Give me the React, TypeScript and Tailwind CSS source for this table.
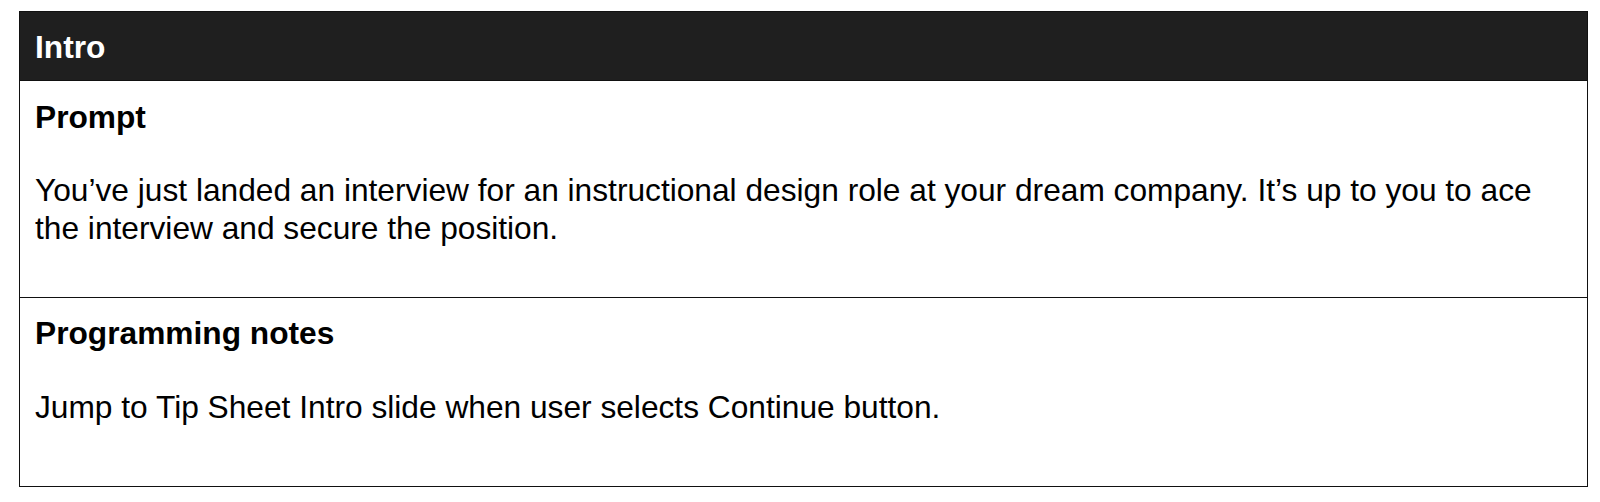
export default function App() {
  return (
    <div className="w-[1600px] h-[502px] bg-white pt-[11px] pl-[19px]" style={{ fontFamily: '"Liberation Sans", Arial, sans-serif' }}>
      <div className="w-[1569px] border border-[#111]">
        <div className="h-[68px] bg-[#1f1f1f] pt-[21px] pl-[15px]">
          <div className="text-[31.7px] leading-[28px] font-bold text-white">Intro</div>
        </div>
        <div className="h-[217px] border-t border-[#111] pt-[22px] pl-[15px] pr-[36px] text-black">
          <div className="text-[31.7px] leading-[28px] font-bold">Prompt</div>
          <p className="mt-[40px] text-[31.7px] leading-[38px]">
            You’ve just landed an interview for an instructional design role at your dream company. It’s up to you to ace the interview and secure the position.
          </p>
        </div>
        <div className="h-[189px] border-t border-[#111] pt-[21px] pl-[15px] pr-[36px] text-black">
          <div className="text-[31.7px] leading-[28px] font-bold">Programming notes</div>
          <p className="mt-[41px] text-[31.7px] leading-[38px]">
            Jump to Tip Sheet Intro slide when user selects Continue button.
          </p>
        </div>
      </div>
    </div>
  );
}
